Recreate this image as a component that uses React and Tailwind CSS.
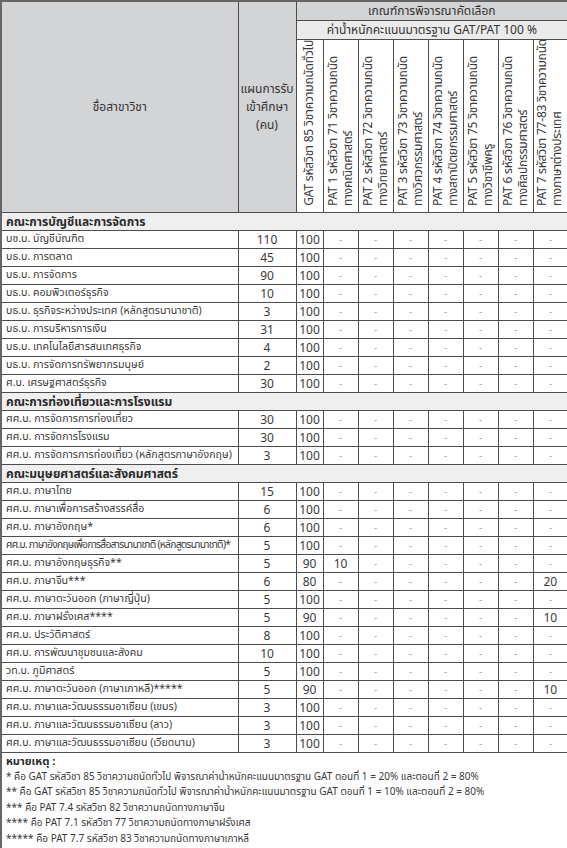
import React from "react";

const faculties = [
  {
    name: "คณะการบัญชีและการจัดการ",
    rows: [
      ["บช.บ. บัญชีบัณฑิต", 110, 100],
      ["บธ.บ. การตลาด", 45, 100],
      ["บธ.บ. การจัดการ", 90, 100],
      ["บธ.บ. คอมพิวเตอร์ธุรกิจ", 10, 100],
      ["บธ.บ. ธุรกิจระหว่างประเทศ (หลักสูตรนานาชาติ)", 3, 100],
      ["บธ.บ. การบริหารการเงิน", 31, 100],
      ["บธ.บ. เทคโนโลยีสารสนเทศธุรกิจ", 4, 100],
      ["บธ.บ. การจัดการทรัพยากรมนุษย์", 2, 100],
      ["ศ.บ. เศรษฐศาสตร์ธุรกิจ", 30, 100],
    ],
  },
  {
    name: "คณะการท่องเที่ยวและการโรงแรม",
    rows: [
      ["ศศ.บ. การจัดการการท่องเที่ยว", 30, 100],
      ["ศศ.บ. การจัดการโรงแรม", 30, 100],
      ["ศศ.บ. การจัดการการท่องเที่ยว (หลักสูตรภาษาอังกฤษ)", 3, 100],
    ],
  },
  {
    name: "คณะมนุษยศาสตร์และสังคมศาสตร์",
    rows: [
      ["ศศ.บ. ภาษาไทย", 15, 100],
      ["ศศ.บ. ภาษาเพื่อการสร้างสรรค์สื่อ", 6, 100],
      ["ศศ.บ. ภาษาอังกฤษ*", 6, 100],
      ["ศศ.บ. ภาษาอังกฤษเพื่อการสื่อสารนานาชาติ (หลักสูตรนานาชาติ)*", 5, 100, null, true],
      ["ศศ.บ. ภาษาอังกฤษธุรกิจ**", 5, 90, { 0: 10 }],
      ["ศศ.บ. ภาษาจีน***", 6, 80, { 6: 20 }],
      ["ศศ.บ. ภาษาตะวันออก (ภาษาญี่ปุ่น)", 5, 100],
      ["ศศ.บ. ภาษาฝรั่งเศส****", 5, 90, { 6: 10 }],
      ["ศศ.บ. ประวัติศาสตร์", 8, 100],
      ["ศศ.บ. การพัฒนาชุมชนและสังคม", 10, 100],
      ["วท.บ. ภูมิศาสตร์", 5, 100],
      ["ศศ.บ. ภาษาตะวันออก (ภาษาเกาหลี)*****", 5, 90, { 6: 10 }],
      ["ศศ.บ. ภาษาและวัฒนธรรมอาเซียน (เขมร)", 3, 100],
      ["ศศ.บ. ภาษาและวัฒนธรรมอาเซียน (ลาว)", 3, 100],
      ["ศศ.บ. ภาษาและวัฒนธรรมอาเซียน (เวียดนาม)", 3, 100],
    ],
  },
];

const pats = [
  ["PAT 1 รหัสวิชา 71 วิชาความถนัด", "ทางคณิตศาสตร์"],
  ["PAT 2 รหัสวิชา 72 วิชาความถนัด", "ทางวิทยาศาสตร์"],
  ["PAT 3 รหัสวิชา 73 วิชาความถนัด", "ทางวิศวกรรมศาสตร์"],
  ["PAT 4 รหัสวิชา 74 วิชาความถนัด", "ทางสถาปัตยกรรมศาสตร์"],
  ["PAT 5 รหัสวิชา 75 วิชาความถนัด", "ทางวิชาชีพครู"],
  ["PAT 6 รหัสวิชา 76 วิชาความถนัด", "ทางศิลปกรรมศาสตร์"],
  ["PAT 7 รหัสวิชา 77-83 วิชาความถนัด", "ทางภาษาต่างประเทศ"],
];

const notes = [
  "* คือ GAT รหัสวิชา 85 วิชาความถนัดทั่วไป พิจารณาค่าน้ำหนักคะแนนมาตรฐาน GAT ตอนที่ 1 = 20% และตอนที่ 2 = 80%",
  "** คือ GAT รหัสวิชา 85 วิชาความถนัดทั่วไป พิจารณาค่าน้ำหนักคะแนนมาตรฐาน GAT ตอนที่ 1 = 10% และตอนที่ 2 = 80%",
  "*** คือ PAT 7.4 รหัสวิชา 82 วิชาความถนัดทางภาษาจีน",
  "**** คือ PAT 7.1 รหัสวิชา 77 วิชาความถนัดทางภาษาฝรั่งเศส",
  "***** คือ PAT 7.7 รหัสวิชา 83 วิชาความถนัดทางภาษาเกาหลี",
];

const cell = "border border-[#4d4d4d] p-0";

export default function App() {
  return (
    <div
      className="w-[567px] h-[848px] bg-white text-[#3a3a3a] overflow-hidden"
      style={{ fontFamily: "Tahoma, 'Noto Sans Thai', 'Noto Sans Thai UI', 'Loma', 'Garuda', 'Noto Sans', sans-serif" }}
    >
      <table className="w-[567px] table-fixed border-collapse border-2 border-[#666] text-[12px] leading-none">
        <colgroup>
          <col className="w-[237px]" />
          <col className="w-[58px]" />
          <col className="w-[27px]" />
          <col className="w-[35px]" />
          <col className="w-[35px]" />
          <col className="w-[35px]" />
          <col className="w-[35px]" />
          <col className="w-[35px]" />
          <col className="w-[35px]" />
          <col className="w-[35px]" />
        </colgroup>
        <thead>
          <tr>
            <th rowSpan={3} className={`${cell} bg-[#d3d4d6] font-normal text-[#333]`}>
              ชื่อสาขาวิชา
            </th>
            <th rowSpan={3} className={`${cell} bg-[#d3d4d6] font-normal text-[#333] leading-[18px]`}>
              แผนการรับ
              <br />
              เข้าศึกษา
              <br />
              (คน)
            </th>
            <th colSpan={8} className={`${cell} bg-[#d3d4d6] font-normal text-[#333]`}>
              <div className="h-[18px] flex items-center justify-center overflow-hidden">เกณฑ์การพิจารณาคัดเลือก</div>
            </th>
          </tr>
          <tr>
            <th colSpan={8} className={`${cell} bg-[#ebebeb] font-normal text-[#333]`}>
              <div className="h-[18px] flex items-center justify-center overflow-hidden">
                ค่าน้ำหนักคะแนนมาตรฐาน GAT/PAT 100 %
              </div>
            </th>
          </tr>
          <tr>
            <th className={`${cell} bg-white font-normal align-bottom`}>
              <div className="h-[172px] flex justify-center items-end pb-[6px] overflow-hidden">
                <div className="[writing-mode:vertical-rl] rotate-180 whitespace-nowrap text-left leading-[15px] text-[#3a3a3a] tracking-[-0.2px]">
                  GAT รหัสวิชา 85 วิชาความถนัดทั่วไป
                </div>
              </div>
            </th>
            {pats.map((p, i) => (
              <th key={i} className={`${cell} bg-white font-normal align-bottom`}>
                <div className="h-[172px] flex justify-center items-end pb-[6px] overflow-hidden">
                  <div className="[writing-mode:vertical-rl] rotate-180 whitespace-nowrap text-left leading-[15px] text-[#3a3a3a] tracking-[-0.2px]">
                    {p[0]}
                    <br />
                    {p[1]}
                  </div>
                </div>
              </th>
            ))}
          </tr>
        </thead>
        <tbody>
          {faculties.map((f, fi) => (
            <React.Fragment key={fi}>
              <tr>
                <td colSpan={10} className={`${cell} bg-[#efefef] font-bold text-[#2a2a2a]`}>
                  <div className="h-[17px] flex items-center pl-[4px] overflow-hidden">{f.name}</div>
                </td>
              </tr>
              {f.rows.map((r, ri) => (
                <tr key={ri}>
                  <td className={cell}>
                    <div
                      className={`h-[17px] flex items-center pl-[4px] whitespace-nowrap overflow-hidden ${
                        r[4] ? "tracking-[-0.7px] text-[10.2px]" : "text-[10.6px]"
                      }`}
                    >
                      {r[0]}
                    </div>
                  </td>
                  <td className={cell}>
                    <div className="h-[17px] flex items-center justify-center">{r[1]}</div>
                  </td>
                  <td className={cell}>
                    <div className="h-[17px] flex items-center justify-center">{r[2]}</div>
                  </td>
                  {pats.map((_, pi) => {
                    const v = r[3] && r[3][pi];
                    return (
                      <td key={pi} className={cell}>
                        {v ? (
                          <div className="h-[17px] flex items-center justify-center">{v}</div>
                        ) : (
                          <div className="h-[17px] flex items-center justify-center text-[#aaa] text-[10px]">-</div>
                        )}
                      </td>
                    );
                  })}
                </tr>
              ))}
            </React.Fragment>
          ))}
          <tr>
            <td colSpan={10} className={`${cell} px-[4px] pt-[1px] pb-[1px] align-top`}>
              <div className="flex flex-col text-[10px] leading-[15.4px] text-[#3a3a3a]">
                <div className="font-bold text-[11px] leading-[16px] text-[#2a2a2a]">หมายเหตุ :</div>
                {notes.map((n, i) => (
                  <div key={i} className="whitespace-nowrap">
                    {n}
                  </div>
                ))}
              </div>
            </td>
          </tr>
        </tbody>
      </table>
    </div>
  );
}
